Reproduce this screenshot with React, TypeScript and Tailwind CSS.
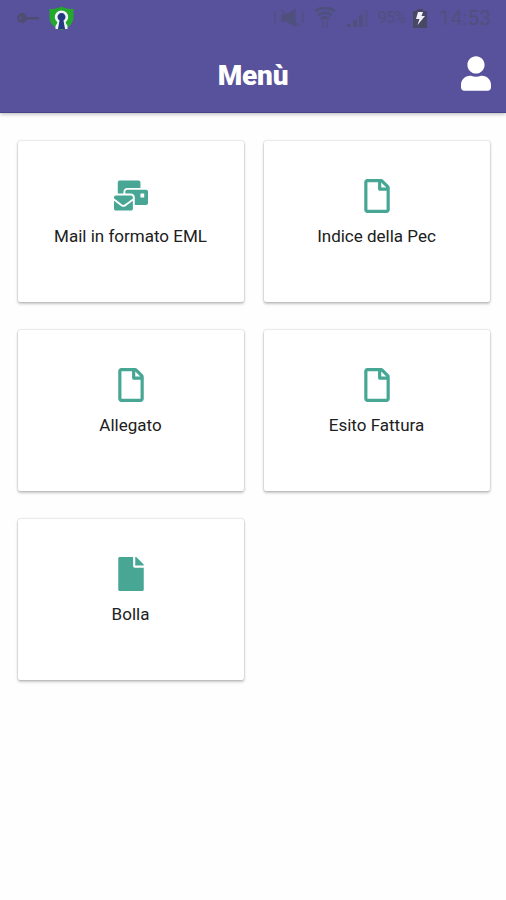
import React from 'react';
import { FaFile, FaMailBulk, FaRegFile, FaUser } from 'react-icons/fa';
import type { IconType } from 'react-icons';

interface MenuItem {
  label: string;
  icon: IconType;
  iconClass: string;
}

const menuItems: MenuItem[] = [
  { label: 'Mail in formato EML', icon: FaMailBulk, iconClass: 'w-[34px] h-[31px]' },
  { label: 'Indice della Pec', icon: FaRegFile, iconClass: 'w-[26px] h-[34px]' },
  { label: 'Allegato', icon: FaRegFile, iconClass: 'w-[26px] h-[34px]' },
  { label: 'Esito Fattura', icon: FaRegFile, iconClass: 'w-[26px] h-[34px]' },
  { label: 'Bolla', icon: FaFile, iconClass: 'w-[26px] h-[34px]' },
];

const StatusBar: React.FC = () => (
  <div className="flex h-9 items-center justify-between pl-4 pr-[15px] text-[#50507f]">
    <div className="flex items-center gap-[9px]">
      {/* VPN key */}
      <svg className="h-3 w-6" viewBox="0 0 24 12">
        <circle cx="6" cy="6" r="5" fill="#4f4e72" />
        <rect x="10" y="5" width="13" height="2.5" fill="#4f4e72" />
        <circle cx="4.5" cy="6" r="1.3" fill="#58529c" />
      </svg>
      {/* VPN shield */}
      <svg className="h-[25px] w-[25px]" viewBox="0 0 25 25">
        <path d="M12.5 0.5C16 2.5 20 3 24.5 3V11C24.5 17 20 22 12.5 24C5 22 0.5 17 0.5 11V3C5 3 9 2.5 12.5 0.5Z" fill="#24a82b" />
        <path d="M6.5 23V20L8.5 16.5A6.7 6.7 0 1 1 16.5 16.5L18.5 20V23H15.5L14.5 17H10.5L9.5 23Z" fill="#edf3fb" />
        <path d="M10.5 14.5A4 4 0 1 1 14.5 14.5L16 23H9Z" fill="#263880" />
      </svg>
    </div>

    <div className="flex items-center">
      {/* Vibrate / muted */}
      <svg className="h-[18px] w-[30px]" viewBox="0 0 30 18" fill="none" stroke="currentColor" strokeWidth="1.5">
        <path d="M1 3V14M29 3V14" />
        <path d="M8 6H13L21 1V17L13 12H8Z" fill="currentColor" />
        <path d="M7 1L25 17" />
      </svg>
      {/* Wi-Fi */}
      <svg className="ml-[10px] h-[22px] w-[22px]" viewBox="0 0 22 22" fill="none" stroke="currentColor" strokeWidth="3">
        <path d="M1 4Q11 -2 21 4M4 8Q11 3.5 18 8M7 12Q11 9 15 12" />
        <path d="M9 14V21M13 14V21" strokeWidth="1.5" />
      </svg>
      {/* Signal */}
      <svg className="ml-[11px] h-[18px] w-[22px]" viewBox="0 0 22 18" fill="currentColor">
        <rect x="0" y="15" width="4" height="3" />
        <rect x="6" y="11" width="4" height="7" />
        <rect x="12" y="6" width="4" height="12" />
        <rect x="18" y="1" width="3" height="17" opacity="0.5" />
      </svg>
      <span className="ml-[9px] w-[29px] whitespace-nowrap text-[16px] tracking-[-0.8px]">95%</span>
      {/* Battery charging */}
      <svg className="ml-[6px] h-[19px] w-[14px]" viewBox="0 0 14 19">
        <path d="M4 0H10V2H14V19H0V2H4Z" fill="#484864" />
        <path d="M5 3H10L8.5 7H12L4.5 16L6.5 10H3Z" fill="#f1f2fb" />
      </svg>
      <span className="ml-3 text-[21px] leading-none">14:53</span>
    </div>
  </div>
);

const MenuCard: React.FC<{ item: MenuItem }> = ({ item }) => {
  const Icon = item.icon;

  return (
    <button className="flex h-[161px] flex-col items-center rounded-[2px] bg-white pt-[37px] shadow-[0_0_2px_rgba(0,0,0,0.28),0_2px_3px_rgba(0,0,0,0.22)]">
      <span className="flex h-[35px] items-center justify-center">
        <Icon className={`${item.iconClass} text-[#47a694]`} />
      </span>
      <span className="mt-[11px] text-[17px] leading-6 text-[#202020]">{item.label}</span>
    </button>
  );
};

const App: React.FC = () => {
  return (
    <div className="min-h-screen bg-[#fefefe] font-['Roboto',sans-serif]">
      <header className="h-[113px] border-b border-[#47438a] bg-[#58529c] shadow-[0_1px_4px_rgba(0,0,0,0.3)]">
        <StatusBar />
        <div className="grid h-[76px] grid-cols-[1fr_auto_1fr] items-center px-[15px]">
          <h1 className="col-start-2 pt-[3px] text-[28px] font-black leading-8 tracking-[-0.2px] text-white">Menù</h1>
          <button className="-mt-px justify-self-end" aria-label="Profilo">
            <FaUser className="h-[35px] w-[30px] text-white" />
          </button>
        </div>
      </header>

      <main className="grid grid-cols-[226px_226px] gap-x-5 gap-y-7 pb-7 pl-[17.5px] pt-7">
        {menuItems.map(item => (
          <MenuCard key={item.label} item={item} />
        ))}
      </main>
    </div>
  );
};

export default App;
